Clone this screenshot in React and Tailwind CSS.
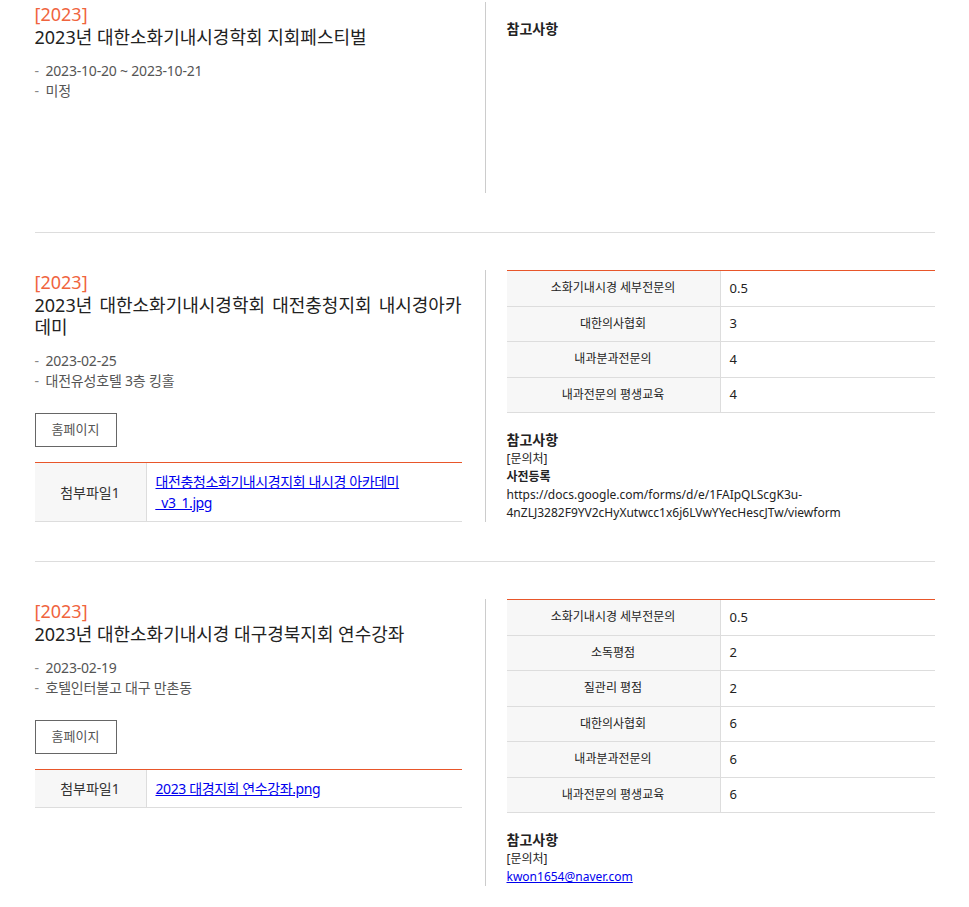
const FONT = { fontFamily: '"Noto Sans", "Noto Sans CJK KR", sans-serif' }

const events = [
  {
    year: '2023',
    title: '2023년 대한소화기내시경학회 지회페스티벌',
    date: '2023-10-20 ~ 2023-10-21',
    place: '미정',
    homepage: false,
    files: [],
    credits: [],
    notes: null,
  },
  {
    year: '2023',
    title: '2023년 대한소화기내시경학회 대전충청지회 내시경아카데미',
    date: '2023-02-25',
    place: '대전유성호텔 3층 킹홀',
    homepage: true,
    files: ['대전충청소화기내시경지회 내시경 아카데미_v3_1.jpg'],
    credits: [
      ['소화기내시경 세부전문의', '0.5'],
      ['대한의사협회', '3'],
      ['내과분과전문의', '4'],
      ['내과전문의 평생교육', '4'],
    ],
    notes: (
      <>
        <p>[문의처]</p>
        <p className="font-bold">사전등록</p>
        <p>
          https://docs.google.com/forms/d/e/1FAIpQLScgK3u-<wbr />4nZLJ3282F9YV2cHyXutwcc1x6j6LVwYYecHescJTw/viewform
        </p>
      </>
    ),
  },
  {
    year: '2023',
    title: '2023년 대한소화기내시경 대구경북지회 연수강좌',
    date: '2023-02-19',
    place: '호텔인터불고 대구 만촌동',
    homepage: true,
    files: ['2023 대경지회 연수강좌.png'],
    credits: [
      ['소화기내시경 세부전문의', '0.5'],
      ['소독평점', '2'],
      ['질관리 평점', '2'],
      ['대한의사협회', '6'],
      ['내과분과전문의', '6'],
      ['내과전문의 평생교육', '6'],
    ],
    notes: (
      <>
        <p>[문의처]</p>
        <a href="#" className="text-[#0000ee] underline">kwon1654@naver.com</a>
      </>
    ),
  },
]

function EventItem({ ev, first }) {
  return (
    <div className={`flex border-b border-[#dddddd] pb-[39px] ${first ? 'pt-[2px]' : 'pt-[37px]'}`}>
      <div className="w-[451px] shrink-0 border-r border-[#cccccc] pr-[23px] min-h-[191px]">
        <p className="text-[18px] leading-[24px] text-[#f0643e]">[{ev.year}]</p>
        <h3 className="text-[18px] leading-[22px] text-[#222222] text-justify">{ev.title}</h3>
        <ul className="mt-[13px] text-[14px] leading-[20px] text-[#555555] tracking-[-0.2px]">
          <li className="flex"><span className="w-[11px] text-[#888888]">-</span>{ev.date}</li>
          <li className="flex"><span className="w-[11px] text-[#888888]">-</span>{ev.place}</li>
        </ul>
        {ev.homepage && (
          <button className="mt-[22px] h-[34px] w-[82px] border border-[#666666] text-[13px] text-[#555555]">
            홈페이지
          </button>
        )}
        {ev.files.length > 0 && (
          <div className="mt-[15px] border-t border-[#e8562a]">
            {ev.files.map((f, i) => (
              <div key={i} className="flex border-b border-[#dddddd] text-[14px] leading-[21px]">
                <div className="w-[112px] shrink-0 bg-[#f7f7f7] border-r border-[#dddddd] flex items-center justify-center text-[#333333]">
                  첨부파일{i + 1}
                </div>
                <div className="flex-1 px-[9px] py-[8px] tracking-[-0.4px]">
                  <a href="#" className="text-[#0000ee] underline">{f}</a>
                </div>
              </div>
            ))}
          </div>
        )}
      </div>
      <div className="flex-1 pl-[21px]">
        {ev.credits.length > 0 && (
          <div className="border-t border-[#e8562a] text-[12px]">
            {ev.credits.map(([k, v]) => (
              <div key={k} className="grid grid-cols-[214px_1fr] border-b border-[#dddddd] h-[35.5px]">
                <div className="bg-[#f7f7f7] border-r border-[#dddddd] flex items-center justify-center text-[#222222]">{k}</div>
                <div className="flex items-center px-[9px] text-[13px] text-[#222222]">{v}</div>
              </div>
            ))}
          </div>
        )}
        <div className="mt-[16px]">
          <h4 className="text-[14px] leading-[21px] font-bold text-[#222222]">참고사항</h4>
          <div className="text-[12px] leading-[18px] text-[#222222]">{ev.notes}</div>
        </div>
      </div>
    </div>
  )
}

export default function App() {
  return (
    <div className="bg-white min-h-screen" style={FONT}>
      <div className="w-[900px] mx-auto">
        {events.map((ev, i) => (
          <EventItem key={i} ev={ev} first={i === 0} />
        ))}
      </div>
    </div>
  )
}
